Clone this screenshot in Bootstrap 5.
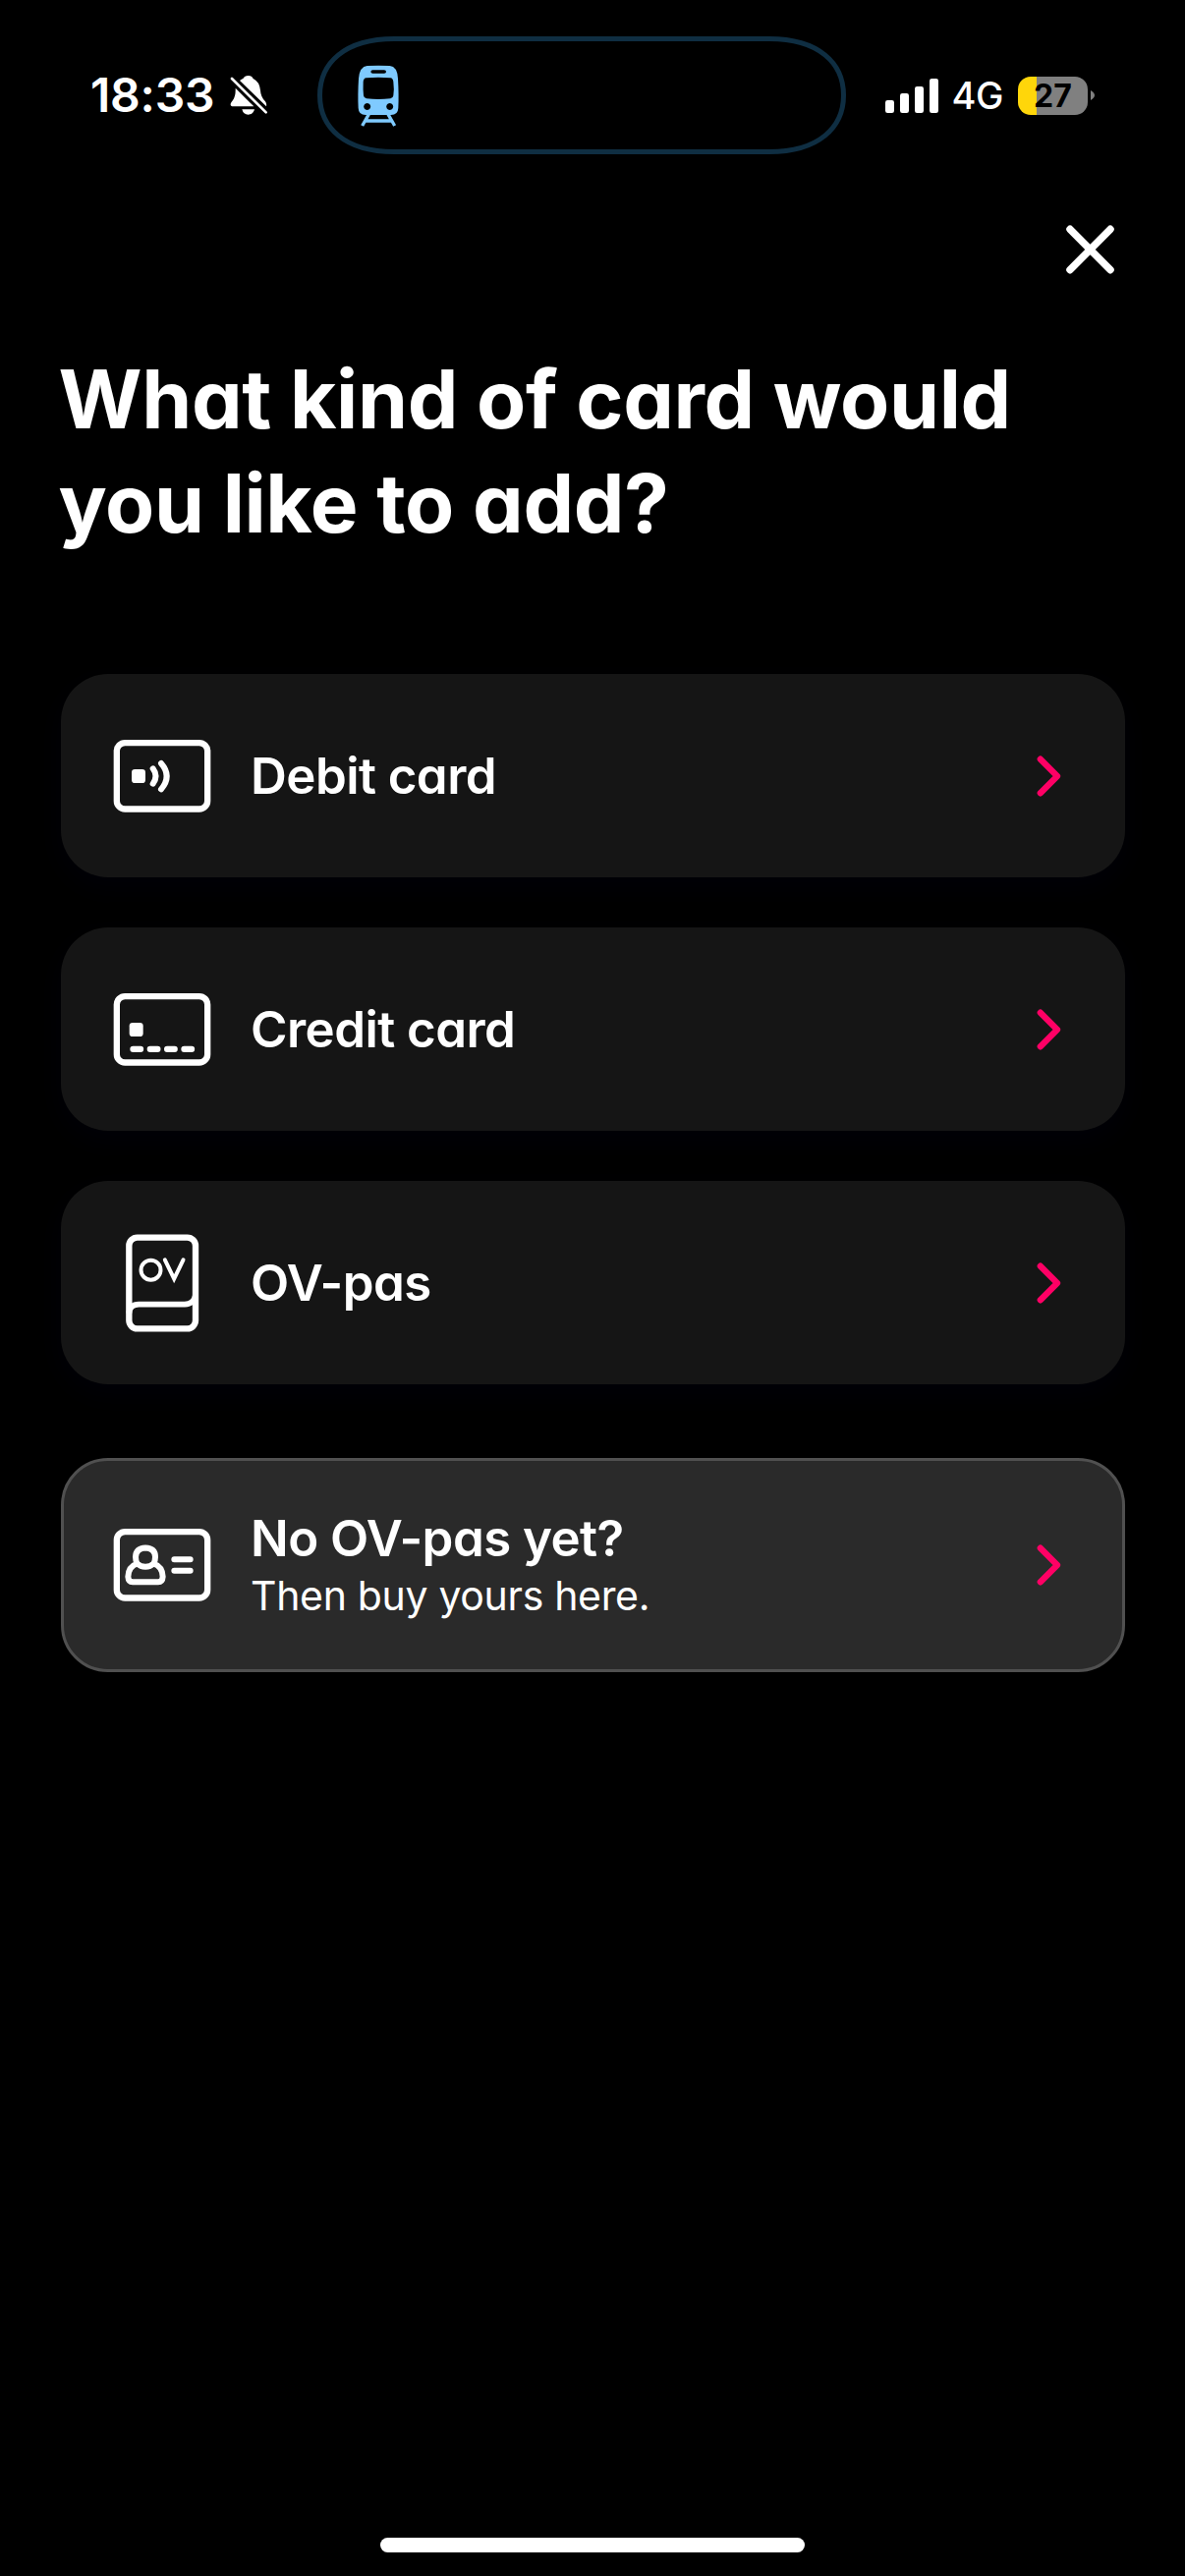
<!DOCTYPE html>
<html lang="en">
<head>
<meta charset="utf-8">
<meta name="viewport" content="width=device-width, initial-scale=1">
<title>Add card</title>
<link href="https://cdn.jsdelivr.net/npm/bootstrap@5.3.0/dist/css/bootstrap.min.css" rel="stylesheet">
<script src="https://cdn.jsdelivr.net/npm/bootstrap@5.3.0/dist/js/bootstrap.bundle.min.js" defer></script>
<style>
body{background:#000;color:#fff;font-family:Inter,"Liberation Sans",sans-serif}
svg{display:block;flex:none;overflow:visible}
.screen{width:1206px;height:2622px}
.statusbar{height:194px;padding:0 92px 0 92px}
.status-side{height:194px}
.clock{font-size:48px;font-weight:600;letter-spacing:-.2px;line-height:1}
.network{font-size:38px;font-weight:500;line-height:1;letter-spacing:-.4px}
.battery{width:71px;height:39px;border-radius:13px;background:linear-gradient(90deg,#ffd60a 19px,#808080 19px);color:#000;font-size:32px;font-weight:700;line-height:39px}
.closebtn{padding:0;border:0;background:none;margin:35px 72.5px 0 0}
.question{font-feature-settings:"cv11";font-size:82px;font-weight:700;line-height:106px;letter-spacing:-.37px;margin:75px 0 0 59.5px;white-space:nowrap}
.options{padding:0 61.5px;margin-top:120px;gap:51px}
.option{height:207px;background:#151515;border:0;border-radius:48px;padding:0 65px 0 53.5px;color:#fff;box-shadow:0 10px 30px #000008;text-decoration:none}
.option-buy{height:218px;background:#2a2a2a;border:3px solid #505050;margin-top:24px;padding:0 62px 0 50.5px;box-shadow:none}
.option-text{font-feature-settings:"cv11";margin-left:40px}
.option-buy .option-text{padding-top:2px}
.option-name{font-size:51px;font-weight:600;line-height:60px;letter-spacing:-.55px}
.option-note{font-size:41px;font-weight:400;line-height:56px;letter-spacing:-.32px}
.homebar{width:432px;height:15px;border-radius:8px;background:#fff;margin-bottom:24px}
</style>
</head>
<body>
<div class="screen d-flex flex-column overflow-hidden">
  <header class="statusbar d-flex justify-content-between align-items-center">
    <div class="status-side d-flex align-items-center">
      <span class="clock">18:33</span>
      <svg class="ms-3" width="40" height="42" viewBox="490 172 120 126" fill="#fff">
        <path d="M520 190 Q526 185 530 184 Q535 175 546 175 Q557 175 561 184 Q580 193 583 220 Q584 240 598 254 Q603 261 601 269 Z"/>
        <path d="M507 213 L563 269 L500 269 Q491 269 492 261 Q493 257 499 250 Q508 238 507 213Z"/>
        <path d="M527 278 H565 Q561 294 546 294 Q531 294 527 278Z"/>
        <path d="M496 184 L600 288" stroke="#000" stroke-width="18"/>
        <path d="M496 184 L600 287" stroke="#fff" stroke-width="8" stroke-linecap="round"/>
      </svg>
    </div>
    <div class="status-side d-flex align-items-center">
      <svg width="54" height="35" viewBox="0 0 162 105" fill="#fff"><rect y="66" width="27" height="39" rx="7"/><rect x="45" y="45" width="27" height="60" rx="7"/><rect x="90" y="24" width="27" height="81" rx="7"/><rect x="135" width="27" height="105" rx="7"/></svg>
      <span class="network" style="margin:0 15px 0 13px">4G</span>
      <div class="d-flex align-items-center"><div class="battery text-center">27</div>
      <svg width="7" height="12" viewBox="0 0 7 12"><path d="M3 1 Q7 3.500 7 6 Q7 8.500 3 11Z" fill="#808080"/></svg></div>
    </div>
    <div class="position-absolute" style="left:323px;top:37px">
      <svg width="538" height="120" viewBox="0 0 538 120" fill="none">
        <path d="M2.500 60 C2.500 27 28 2.500 78 2.500 H460 C510 2.500 535.500 27 535.500 60 S510 117.500 460 117.500 H78 C28 117.500 2.500 93 2.500 60Z" stroke="#0f2e42" stroke-width="5"/>
        <g transform="scale(.33333) translate(-760 -51)">
          <path fill="#7fcaff" fill-rule="evenodd" d="M912 141 Q946 139 981 141 Q1004 143 1006 180 Q1009 230 1007 270 Q1006 291 985 291 H907 Q886 291 885 270 Q883 230 886 180 Q889 143 912 141Z M929 154 Q923 154 923 159 Q923 164 929 164 H964 Q970 164 970 159 Q970 154 964 154Z M909 178 Q901 179 900 190 Q899 215 901 232 Q902 240 910 241 Q946 245 983 241 Q991 240 992 232 Q995 215 992 190 Q991 179 983 178 Q946 175 909 178Z M912 255 a10.500 10.500 0 1 0 .1 0Z M981 255 a10.500 10.500 0 1 0 .1 0Z"/>
          <path stroke="#7fcaff" stroke-width="10" d="M917 289 L897 324 M976 289 L996 324 M908 309 H985"/>
        </g>
      </svg>
    </div>
  </header>

  <button class="closebtn align-self-end" aria-label="Close">
    <svg width="49" height="50" viewBox="0 0 49 50"><path d="M4 4.300 L45 45.700 M45 4.300 L4 45.700" stroke="#fff" stroke-width="7.500" stroke-linecap="round"/></svg>
  </button>

  <h1 class="question">What kind of card would<br>you like to add?</h1>

  <main class="options d-flex flex-column">
    <a class="option d-flex align-items-center">
      <svg width="100" height="106" viewBox="195 201 300 318" fill="none" stroke="#fff">
        <rect x="206.500" y="258.500" width="277" height="202" rx="25" stroke-width="19"/>
        <rect x="252" y="339" width="42" height="42" rx="10" fill="#fff" stroke="none"/>
        <path d="M317 337 Q334 360 317 383 M342 321 Q376 360 342 400" stroke-width="18" stroke-linecap="round"/>
      </svg>
      <div class="option-text"><div class="option-name">Debit card</div></div>
      <svg class="ms-auto" width="26" height="46" viewBox="222 291.500 78 138" fill="none"><path d="M236.500 308.500 L288 360.500 L236.500 412.500" stroke="#ff0065" stroke-width="19" stroke-linecap="round" stroke-linejoin="round"/></svg>
    </a>
    <a class="option d-flex align-items-center">
      <svg width="100" height="106" viewBox="195 195 300 318" fill="none" stroke="#fff">
        <rect x="206.500" y="252.500" width="277" height="202" rx="25" stroke-width="19"/>
        <rect x="245" y="333" width="42" height="42" rx="10" fill="#fff" stroke="none"/>
        <path d="M256.500 413.500 H279 M308.500 413.500 H331 M360.500 413.500 H383 M412.500 413.500 H435" stroke-width="19" stroke-linecap="round"/>
      </svg>
      <div class="option-text"><div class="option-name">Credit card</div></div>
      <svg class="ms-auto" width="26" height="46" viewBox="222 291.500 78 138" fill="none"><path d="M236.500 308.500 L288 360.500 L236.500 412.500" stroke="#ff0065" stroke-width="19" stroke-linecap="round" stroke-linejoin="round"/></svg>
    </a>
    <a class="option d-flex align-items-center">
      <svg width="100" height="106" viewBox="195 189 300 318" fill="none" stroke="#fff">
        <rect x="244" y="209" width="203" height="278" rx="25" stroke-width="19"/>
        <path d="M244 440 Q246 413 274 413 H414 Q442 412 447 384" stroke-width="17"/>
        <circle cx="310.500" cy="308" r="30" stroke-width="12"/>
        <path d="M353.500 277 L381.500 335 L409.500 277" stroke-width="12" stroke-linecap="round" stroke-linejoin="miter"/>
      </svg>
      <div class="option-text"><div class="option-name">OV-pas</div></div>
      <svg class="ms-auto" width="26" height="46" viewBox="222 291.500 78 138" fill="none"><path d="M236.500 308.500 L288 360.500 L236.500 412.500" stroke="#ff0065" stroke-width="19" stroke-linecap="round" stroke-linejoin="round"/></svg>
    </a>
    <a class="option option-buy d-flex align-items-center">
      <svg width="100" height="106" viewBox="154.400 210.500 237.600 318" preserveAspectRatio="none" fill="none" stroke="#fff">
        <g transform="translate(154.400 0) scale(.792 1)">
        <rect x="11.500" y="268" width="277" height="202" rx="25" stroke-width="19"/>
        <path d="M74 365 Q69 357 69 345 Q70 318 99 317 Q129 318 129 345 Q129 357 124 365 Q151 374 152 405 Q151 421 138 421 H60 Q47 421 46 405 Q47 374 74 365 Q84 375 99 375 Q114 375 124 365" stroke-width="18" stroke-linejoin="round"/>
        <path d="M187 352 H236 M187 387 H236" stroke-width="18" stroke-linecap="round"/>
        </g>
      </svg>
      <div class="option-text"><div class="option-name">No OV-pas yet?</div><div class="option-note">Then buy yours here.</div></div>
      <svg class="ms-auto" width="26" height="46" viewBox="222 291.500 78 138" fill="none"><path d="M236.500 308.500 L288 360.500 L236.500 412.500" stroke="#ff0065" stroke-width="19" stroke-linecap="round" stroke-linejoin="round"/></svg>
    </a>
  </main>

  <div class="homebar mt-auto align-self-center"></div>
</div>
</body>
</html>
